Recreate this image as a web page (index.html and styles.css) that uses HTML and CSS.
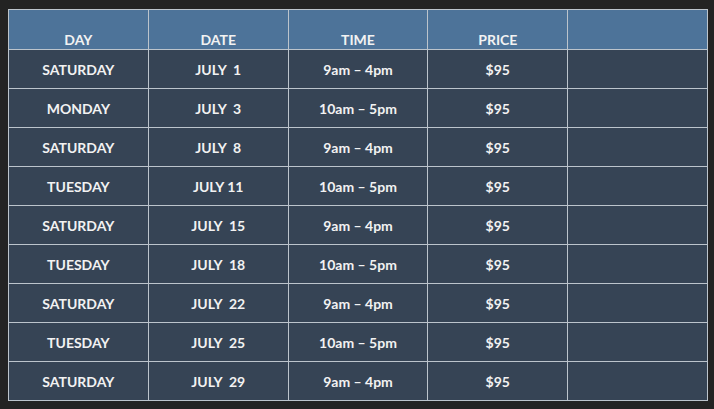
FILE: index.html
```html
<!DOCTYPE html>
<html>
<head>
<meta charset="utf-8">
<link rel="stylesheet" href="styles.css">
</head>
<body>
<table class="schedule">
  <thead>
    <tr><th>DAY</th><th>DATE</th><th>TIME</th><th>PRICE</th><th></th></tr>
  </thead>
  <tbody>
    <tr><td>SATURDAY</td><td>JULY&nbsp; 1</td><td>9am – 4pm</td><td>$95</td><td></td></tr>
    <tr><td>MONDAY</td><td>JULY&nbsp; 3</td><td>10am – 5pm</td><td>$95</td><td></td></tr>
    <tr><td>SATURDAY</td><td>JULY&nbsp; 8</td><td>9am – 4pm</td><td>$95</td><td></td></tr>
    <tr><td>TUESDAY</td><td>JULY 11</td><td>10am – 5pm</td><td>$95</td><td></td></tr>
    <tr><td>SATURDAY</td><td>JULY&nbsp; 15</td><td>9am – 4pm</td><td>$95</td><td></td></tr>
    <tr><td>TUESDAY</td><td>JULY&nbsp; 18</td><td>10am – 5pm</td><td>$95</td><td></td></tr>
    <tr><td>SATURDAY</td><td>JULY&nbsp; 22</td><td>9am – 4pm</td><td>$95</td><td></td></tr>
    <tr><td>TUESDAY</td><td>JULY&nbsp; 25</td><td>10am – 5pm</td><td>$95</td><td></td></tr>
    <tr><td>SATURDAY</td><td>JULY&nbsp; 29</td><td>9am – 4pm</td><td>$95</td><td></td></tr>
  </tbody>
</table>
</body>
</html>
```
FILE: styles.css
```css
html, body {
  margin: 0;
  background: #232323;
}
body {
  padding: 9px 0 0 8px;
  font-family: Lato, "Open Sans", "Liberation Sans", sans-serif;
}
.schedule {
  border-collapse: separate;
  border-spacing: 1px;
  background: #bcc4cc;
  width: 700px;
  table-layout: fixed;
}
.schedule th,
.schedule td {
  padding: 0;
  text-align: center;
  color: #f2f2f2;
  font-weight: 700;
  font-size: 14px;
  height: 38px;
}
.schedule th {
  background: #4d7399;
  vertical-align: bottom;
  padding-bottom: 1px;
  line-height: 16px;
}
.schedule td {
  background: #364455;
  vertical-align: middle;
}
```
